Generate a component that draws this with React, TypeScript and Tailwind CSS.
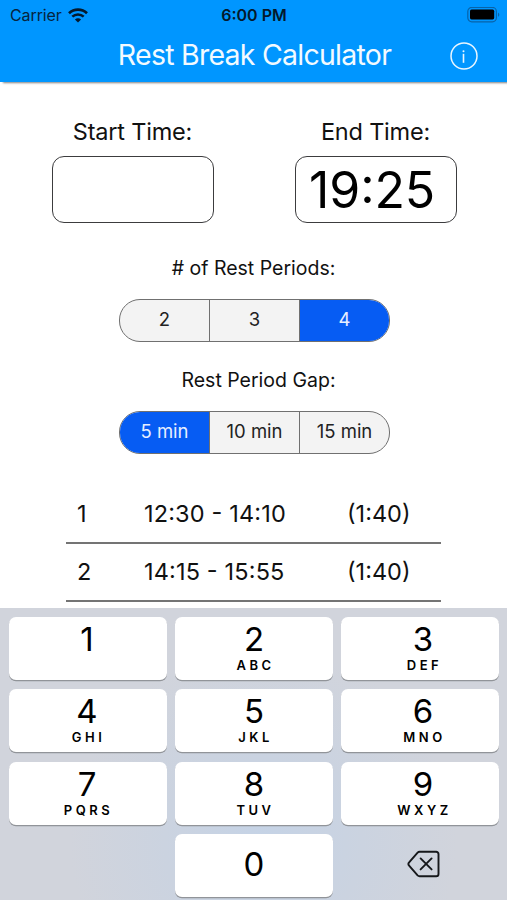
import React, { useState } from 'react';
import clsx from 'clsx';

interface RestPeriod {
  id: number;
  range: string;
  duration: string;
}

interface PadKey {
  digit: string;
  letters?: string;
}

const PERIODS: RestPeriod[] = [
  { id: 1, range: '12:30 - 14:10', duration: '(1:40)' },
  { id: 2, range: '14:15 - 15:55', duration: '(1:40)' },
];

const KEYS: PadKey[] = [
  { digit: '1', letters: '' },
  { digit: '2', letters: 'ABC' },
  { digit: '3', letters: 'DEF' },
  { digit: '4', letters: 'GHI' },
  { digit: '5', letters: 'JKL' },
  { digit: '6', letters: 'MNO' },
  { digit: '7', letters: 'PQRS' },
  { digit: '8', letters: 'TUV' },
  { digit: '9', letters: 'WXYZ' },
];

const WifiIcon = () => (
  <svg width="20" height="15" viewBox="0 0 20 15" fill="none" stroke="#04192c">
    <path d="M1 5.2C6 .4 14 .4 19 5.2" strokeWidth="2.7" />
    <path d="M4.3 8.7c3.2-3 8.2-3 11.4 0" strokeWidth="2.5" />
    <path d="M10 14.6 6.9 11.5c1.7-1.6 4.5-1.6 6.2 0z" fill="#04192c" stroke="none" />
  </svg>
);

const BatteryIcon = () => (
  <svg width="33" height="16" viewBox="0 0 33 16" fill="none">
    <rect x="0.8" y="0.4" width="28.6" height="14.4" rx="4" stroke="#0863a8" strokeWidth="1.2" />
    <rect x="3" y="2.6" width="24.2" height="9.8" rx="1.6" fill="#000" />
    <path d="M31 5.4c1.8.7 1.8 3.7 0 4.4z" fill="#0863a8" />
  </svg>
);

const InfoIcon = () => (
  <svg width="28" height="28" viewBox="0 0 28 28" fill="none" stroke="#e9f6ff">
    <circle cx="14" cy="14" r="13" strokeWidth="1.5" />
    <path d="M13.5 11.8v9" strokeWidth="1.6" />
    <circle cx="13.5" cy="9.2" r="1" fill="#e9f6ff" stroke="none" />
  </svg>
);

const DeleteIcon = () => (
  <svg width="33" height="28" viewBox="0 0 33 28" fill="none" stroke="#16181b" strokeLinecap="round" strokeLinejoin="round">
    <path d="M12.6 1.8h16.6a2.3 2.3 0 0 1 2.3 2.3v19.8a2.3 2.3 0 0 1-2.3 2.3H12.6c-.8 0-1.5-.3-2-.8L2.1 15.6c-1-1-1-2.2 0-3.2l8.5-9.8c.5-.5 1.2-.8 2-.8z" strokeWidth="1.9" />
    <path d="m13.6 8.4 11 11M24.6 8.4l-11 11" strokeWidth="1.9" />
  </svg>
);

const TimeField = ({ label, value }: { label: string; value: string }) => (
  <label className="flex w-[162px] flex-col items-center">
    <span className="h-[37px] whitespace-nowrap pr-px text-[23.5px] leading-7 tracking-[-0.2px] text-[#111]">{label}</span>
    <span className="mt-px flex h-[67px] w-full items-center rounded-xl border-[1.4px] border-[#3c3c3e] pl-[13px] text-[50px] leading-none tracking-[-0.1px] text-black [font-feature-settings:'case']">
      {value}
    </span>
  </label>
);

interface SegmentedProps {
  options: string[];
  selected: number;
  onSelect: (index: number) => void;
}

const Segmented: React.FC<SegmentedProps> = ({ options, selected, onSelect }) => (
  <div className="flex h-[43px] w-[271px] overflow-hidden rounded-[21px] border border-[#707070] bg-[#f3f3f3]">
    {options.map((option, i) => (
      <button
        key={option}
        onClick={() => onSelect(i)}
        className={clsx(
          'flex-1 whitespace-nowrap pb-px text-[18.5px]',
          i > 0 && 'border-l border-[#707070]',
          i === selected ? 'bg-[#065cf3] text-[#e6efff]' : 'text-[#222]'
        )}
      >
        {option}
      </button>
    ))}
  </div>
);

export default function App() {
  const [count, setCount] = useState(2);
  const [gap, setGap] = useState(0);

  return (
    <div className="flex h-[900px] w-[507px] flex-col overflow-hidden bg-white font-['Inter',sans-serif]">
      {/* Status bar and title */}
      <header className="relative z-10 h-[82px] shrink-0 bg-[#0096ff] shadow-[3px_1px_2px_rgba(0,0,0,0.5)]">
        <div className="grid h-[30px] grid-cols-3 items-center pl-[10px] pr-[7px] text-[16px] text-[#06243e]">
          <div className="flex items-center gap-[6px]">
            <span className="tracking-[-0.1px]">Carrier</span>
            <WifiIcon />
          </div>
          <span className="pr-[2px] text-center font-semibold text-[#04192c] [font-feature-settings:'case']">6:00 PM</span>
          <div className="flex justify-end">
            <BatteryIcon />
          </div>
        </div>
        <div className="grid h-[48px] grid-cols-[1fr_auto_1fr] items-center pr-[29px] pl-[31px]">
          <div />
          <h1 className="whitespace-nowrap pt-[2px] text-[28.5px] leading-none tracking-[-0.75px] text-[#f2faff]">Rest Break Calculator</h1>
          <div className="flex justify-end pt-[4px]">
            <InfoIcon />
          </div>
        </div>
      </header>

      <main className="flex h-[526px] shrink-0 flex-col items-center overflow-hidden pt-[36px]">
        <div className="flex gap-[81px] pl-[2px]">
          <TimeField label="Start Time:" value="" />
          <TimeField label="End Time:" value="19:25" />
        </div>

        <h2 className="mt-[33px] text-[19.5px] leading-6 text-[#111]"># of Rest Periods:</h2>
        <div className="mt-[19px] pl-[2px]">
          <Segmented options={['2', '3', '4']} selected={count} onSelect={setCount} />
        </div>

        <h2 className="mt-[26px] pl-[10px] text-[19.5px] leading-6 text-[#111]">Rest Period Gap:</h2>
        <div className="mt-[19px] pl-[2px]">
          <Segmented options={['5 min', '10 min', '15 min']} selected={gap} onSelect={setGap} />
        </div>

        <div className="mt-[32px] w-[375px]">
          {PERIODS.map((p) => (
            <div
              key={p.id}
              className="flex h-[58px] items-center border-b-2 border-[#747474] pl-[11px] text-[23.5px] text-[#111] [font-feature-settings:'case']"
            >
              <span className="w-[67px]">{p.id}</span>
              <span className="w-[203px] whitespace-nowrap tracking-[0.15px]">{p.range}</span>
              <span>{p.duration}</span>
            </div>
          ))}
        </div>
      </main>

      {/* Number pad */}
      <div className="grid flex-1 grid-cols-[158px_158px_158px] content-start gap-x-2 gap-y-[9.4px] bg-[#d1d4dc] bg-[radial-gradient(circle_at_52%_80%,#c5d3e6_0%,#cbd3e0_28%,#d1d4dc_55%)] pt-[9px] pl-[9px]">
        {KEYS.map((key, i) => (
          <button
            key={key.digit}
            className={clsx(
              'flex h-[63px] flex-col items-center rounded-[7px] bg-white pt-[4.8px] text-black shadow-[0_1.2px_0_#919499]',
              i % 3 === 2 && 'pl-[6px]',
              i % 3 === 0 && 'pr-[2px]'
            )}
          >
            <span className="text-[33px] leading-[34px]">{key.digit}</span>
            <span className="pl-[3px] text-[13px] leading-[18px] font-semibold tracking-[3.5px]">{key.letters}</span>
          </button>
        ))}
        <div />
        <button className="flex h-[63px] items-center justify-center rounded-[7px] bg-white pb-[2px] text-[33px] leading-none text-black shadow-[0_1.2px_0_#919499]">
          0
        </button>
        <button className="flex items-center justify-center pb-[4px] pl-[7px]">
          <DeleteIcon />
        </button>
      </div>
    </div>
  );
}
